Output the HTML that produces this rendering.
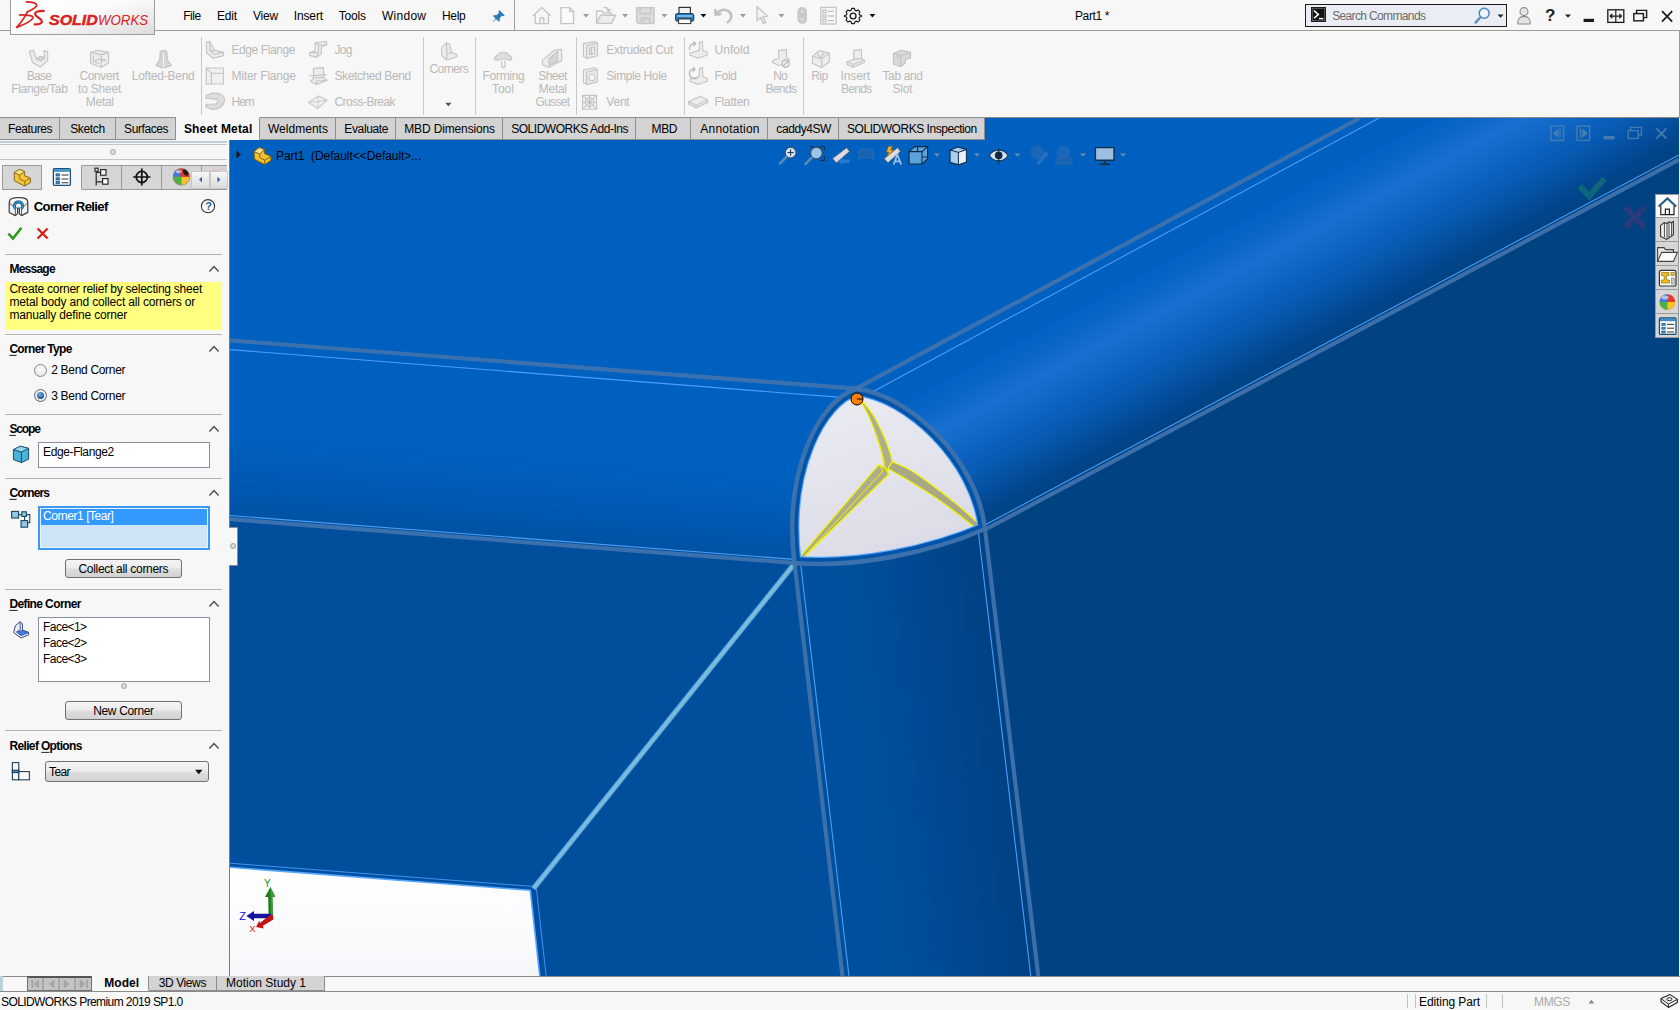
<!DOCTYPE html>
<html lang="en">
<head>
<meta charset="utf-8">
<title>SOLIDWORKS Premium 2019 - Part1</title>
<style>
*{box-sizing:border-box;margin:0;padding:0}
html,body{width:1680px;height:1010px;overflow:hidden;background:#f7f7f7;font-family:"Liberation Sans","DejaVu Sans",sans-serif;font-size:12px;color:#000}
body{position:relative}
.a{position:absolute}
svg{display:block;overflow:visible}
.t{position:absolute;z-index:7;transform-origin:0 50%;white-space:pre;line-height:16px;height:16px;margin-top:-8px}
.b{font-weight:bold}
#vp{position:absolute;left:230px;top:118px;width:1449px;height:858px;overflow:hidden}
#topbar{left:0;top:0;width:1680px;height:31px;background:#f7f7f7;border-bottom:1px solid #9c9c9c}
#logo{left:10px;top:-1px;width:145px;height:36px;border:1px solid #9e9e9e;background:linear-gradient(165deg,#ffffff 0%,#fbfbfb 45%,#dcdcdc 100%);z-index:5}
#ribbon{left:0;top:31px;width:1680px;height:86px;background:#f7f7f7}
.rsep{position:absolute;top:37px;width:1px;height:78px;background:#c9c9c9}
.ctab{position:absolute;top:117px;height:23px;background:#d3d3d3;border:1px solid #8e8e8e;border-left:none}
.ctab.act{background:#f7f7f7;border-top-color:#f7f7f7;border-bottom-color:#f7f7f7}
#panel{left:0;top:140px;width:230px;height:836px;background:#f7f7f7;border-right:1px solid #7c7c7c}
.psep{position:absolute;left:5px;width:217px;height:1px;background:#b4b4b4}
.ptab{position:absolute;top:165px;height:25px;background:#d6d6d6;border:1px solid #9a9a9a;border-left:none}
.ptab.act{background:#f7f7f7;border-bottom-color:#f7f7f7;border-top-color:#f7f7f7}
.btn{position:absolute;height:19px;border:1px solid #707070;border-radius:3px;background:linear-gradient(#f4f4f4 0%,#ececec 48%,#dedede 52%,#d2d2d2 100%)}
.box{position:absolute;background:#fff;border:1px solid #8a8fa0}
.btab{position:absolute;top:976px;height:15px;background:#d3d3d3;border:1px solid #8e8e8e;border-top:none}
.rt{position:absolute;left:1655px;width:24px;height:24px;background:#d6d6d6;border:1px solid #9a9a9a;border-top:none}
</style>
</head>
<body>
<svg id="vp" viewBox="230 118 1449 858">
<defs>
<linearGradient id="gCyl" gradientUnits="userSpaceOnUse" x1="856" y1="389" x2="943.2" y2="551.5">
<stop offset="0" stop-color="#0060c0"/>
<stop offset="0.17" stop-color="#0060c0"/>
<stop offset="0.30" stop-color="#0a67c8"/>
<stop offset="0.41" stop-color="#1870d0"/>
<stop offset="0.51" stop-color="#1269c8"/>
<stop offset="0.61" stop-color="#0c61be"/>
<stop offset="0.71" stop-color="#0859b1"/>
<stop offset="0.82" stop-color="#044e9e"/>
<stop offset="0.93" stop-color="#014589"/>
<stop offset="1" stop-color="#004282"/>
</linearGradient>
<linearGradient id="gLeft" gradientUnits="userSpaceOnUse" x1="500" y1="362" x2="486" y2="540">
<stop offset="0" stop-color="#0060c0"/>
<stop offset="0.5" stop-color="#0060c0"/>
<stop offset="0.75" stop-color="#005ab4"/>
<stop offset="1" stop-color="#0051a3"/>
</linearGradient>
<linearGradient id="gBot" gradientUnits="userSpaceOnUse" x1="820" y1="780" x2="1012" y2="758">
<stop offset="0" stop-color="#004f9e"/>
<stop offset="0.3" stop-color="#004f9d"/>
<stop offset="0.65" stop-color="#004890"/>
<stop offset="1" stop-color="#004182"/>
</linearGradient>
<linearGradient id="gCorner" x1="0" y1="0" x2="0.3" y2="1">
<stop offset="0" stop-color="#ececf2"/>
<stop offset="1" stop-color="#dcdce8"/>
</linearGradient>
<linearGradient id="gWhite" x1="0" y1="0" x2="0" y2="1">
<stop offset="0" stop-color="#ffffff"/>
<stop offset="1" stop-color="#f6f7fa"/>
</linearGradient>
</defs>
<!-- zone A: top-left flat -->
<rect x="230" y="118" width="1449" height="858" fill="#0060c0"/>
<!-- zone B: cylinder -->
<polygon points="856,388.7 1360,118 1679,118 1679,159 985,529" fill="url(#gCyl)"/>
<!-- zone C: right flat -->
<polygon points="985,529 1679,159 1679,976 1038.3,976" fill="#004282"/>
<!-- zone F: left bend -->
<polygon points="230,340.4 856,388.7 794.5,563 230,519.2" fill="url(#gLeft)"/>
<!-- zone E: bottom-left flat -->
<polygon points="230,519.2 794.5,563 842.5,976 230,976" fill="#004e9c"/>
<!-- zone D: bottom bend -->
<polygon points="794.5,563 985,529 1038.3,976 842.5,976" fill="url(#gBot)"/>
<g fill="none" stroke-linecap="butt">
<!-- white background area seen through the part, bottom-left -->
<polygon points="230,863.2 536.2,886.7 546.2,976 230,976" fill="#0050a2"/>
<polygon points="230,867.3 530.3,890.3 539.8,976 230,976" fill="url(#gWhite)"/>
<polyline points="230,863.2 536.2,886.7 546.2,976" stroke="#3f93f0" stroke-width="1"/>
<polyline points="230,867.3 530.3,890.3 539.8,976" stroke="#57a6ff" stroke-width="1.6"/>
<!-- diagonal seam -->
<line x1="795" y1="563" x2="533.5" y2="888.5" stroke="#4f9be0" stroke-width="5.5"/>
<line x1="795" y1="563" x2="533.5" y2="888.5" stroke="#7cbcd8" stroke-width="3.4"/>
<!-- thick silhouette edges -->
<g stroke="#3f73ad" stroke-opacity="0.92" stroke-width="4.2">
<line x1="230" y1="340.4" x2="856" y2="388.7"/>
<line x1="856" y1="388.7" x2="1360" y2="118"/>
<line x1="985" y1="529.6" x2="1679" y2="159.6"/>
<line x1="794.5" y1="563" x2="842.5" y2="976"/>
<line x1="985" y1="529" x2="1038.3" y2="976"/>
<line x1="230" y1="519.2" x2="794.5" y2="563"/>
</g>
<!-- thin tangent edges -->
<g stroke="#4c9ef6" stroke-width="1.1">
<line x1="230" y1="349.6" x2="848" y2="397.9"/>
<line x1="866" y1="395.4" x2="1379" y2="118"/>
<line x1="982" y1="526.6" x2="1679" y2="154.9"/>
<line x1="800.8" y1="565" x2="849" y2="976"/>
<line x1="978.5" y1="533" x2="1030.8" y2="976"/>
<line x1="230" y1="515.5" x2="794" y2="559.4"/>
</g>
</g>
<!-- corner relief region -->
<clipPath id="cpCorner"><path d="M856,389 C908,394 977,458 985,529 C930,553 855,568 794.5,563 C783,470 820,400 856,389 Z"/></clipPath>
<g clip-path="url(#cpCorner)">
<path d="M856,389 C908,394 977,458 985,529 C930,553 855,568 794.5,563 C783,470 820,400 856,389 Z" fill="url(#gCorner)"/>
<!-- tear ridges -->
<path d="M861.5,402.8 C862.8,405.3 866.9,412.2 869.4,417.8 C871.9,423.4 874.6,430.6 876.7,436.5 C878.8,442.4 880.7,448.0 881.9,453.2 C883.1,458.4 883.6,465.3 884.0,467.7 L887.4,471.6 L892.3,461.5  C891.9,460.1 891.6,457.4 890.2,453.2 C888.8,449.0 886.8,442.8 884.0,436.5 C881.2,430.2 877.1,421.5 873.6,415.7 C870.1,409.9 864.5,404.0 862.7,401.6 Z" fill="#aeae8a" stroke="#f4f400" stroke-width="1.2"/>
<path d="M892.0,461.6 C895.6,463.3 906.1,467.5 913.4,471.9 C920.6,476.2 928.1,482.2 935.5,487.7 C942.9,493.2 949.5,498.2 957.7,505.1 C965.9,512.0 980.1,524.9 984.6,528.9 L978.3,530.2 C974.3,527.1 962.1,517.3 954.5,511.5 C946.9,505.7 939.8,500.6 932.4,495.6 C925.0,490.6 917.6,485.9 910.2,481.4 C902.8,476.9 891.7,470.8 888.0,468.7 Z" fill="#a8a886" stroke="#f4f400" stroke-width="1.2"/>
<path d="M878.8,464.6 L797.5,559.5 L801,560 L888.5,474.5 L886,469 Z" fill="#adad8a" stroke="#f4f400" stroke-width="1.2"/>
<path d="M878.8,464.6 L883,471 L801,560" fill="none" stroke="#f4f400" stroke-width="1"/>
<path d="M884,467.7 L887.4,471.6 L888.5,474.5 M876.7,436.5 Q882,452 886.4,469.6" fill="none" stroke="#e8e800" stroke-width=".9"/>
<path d="M856,389 C908,394 977,458 985,529 C930,553 855,568 794.5,563 C783,470 820,400 856,389 Z" fill="none" stroke="#58a8ff" stroke-width="14.4"/>
<path d="M856,389 C908,394 977,458 985,529 C930,553 855,568 794.5,563 C783,470 820,400 856,389 Z" fill="none" stroke="#0054a8" stroke-width="12"/>
</g>
<path d="M856,389 C908,394 977,458 985,529 C930,553 855,568 794.5,563 C783,470 820,400 856,389 Z" fill="none" stroke="#3f73ad" stroke-opacity="0.92" stroke-width="4.6" stroke-linejoin="round"/>
<circle cx="857" cy="399" r="6" fill="#ff8000" stroke="#000" stroke-width="1"/>
<line x1="857" y1="399" x2="862.5" y2="399" stroke="#000" stroke-width="1"/>
<!-- triad -->
<g>
<polygon points="268.6,916.5 268.2,897 265,897 270.4,887 275.4,897 272.4,897 273,916.5" fill="#1c7c1c"/>
<polygon points="270.4,887 275.4,897 272.4,897 273,916.5 271,916.5 270.6,897" fill="#3c9c3c"/>
<polygon points="271,913.8 254,913.8 254,911 246.4,916 254,921 254,918.2 271,918.2" fill="#15159c"/>
<polygon points="273,915 273.4,919.6 263,925.8 263.6,928.6 256,927 259.4,920.6 260,923 270,915" fill="#c01414"/>
<text x="267.4" y="887" font-size="10" fill="#0a9a0a" text-anchor="middle" font-family="Liberation Sans, sans-serif">Y</text>
<text x="242.6" y="919.6" font-size="11" fill="#1010e8" text-anchor="middle" font-family="Liberation Sans, sans-serif">Z</text>
<text x="252.4" y="932" font-size="9.5" fill="#f01010" text-anchor="middle" font-family="Liberation Sans, sans-serif">X</text>
</g>
<!--VP-DETAIL2-->
</svg>
<!-- ===== title bar ===== -->
<div id="topbar" class="a"></div>
<div id="logo" class="a"></div>
<svg class="a" style="left:10px;top:0;z-index:6" width="145" height="35" viewBox="10 0 145 35">
<g fill="none" stroke="#d9231f" stroke-linecap="round" stroke-linejoin="round">
<path d="M26.4,1.9 C31,2 36.2,2.7 36.7,5.1 C37.1,7.6 31,10 27.3,11.9" stroke-width="1.7"/>
<path d="M27.6,11.6 C25,16.4 21,23 16.6,27.4 C24,24.6 31.8,21 32.9,18 C33.7,15.5 29,15 19.6,14.9" stroke-width="1.7"/>
<path d="M43.8,10.9 C39,10.8 35.3,11.8 35.1,13.8 C34.9,16.4 41.7,18.6 41.9,21.4 C42.1,23.6 38.6,24.6 34.6,24.4" stroke-width="2.2"/>
</g>
</svg>
<!-- pin -->
<svg class="a" style="left:491px;top:9px" width="15" height="15" viewBox="0 0 15 15"><path d="M8.2,1 L13.8,6.6 L12.4,7.2 L10.8,6.8 L8.6,9.4 L8.8,12 L7.6,12.6 L5.2,10.2 L1.2,13.8 L4.6,9.6 L2.2,7.2 L2.8,6 L5.4,6.2 L8,4 L7.6,2.4 Z" fill="#2b7ab9"/></svg>
<div class="a" style="left:514px;top:0;width:1px;height:30px;background:#a0a0a0"></div>
<!-- quick access toolbar -->
<svg class="a" style="left:530px;top:5px" width="350" height="22" viewBox="530 5 350 22">
<g fill="none" stroke="#c6c6c6" stroke-width="1.4" stroke-linejoin="round">
<!-- home -->
<path d="M532.8,16 L541.8,7.6 L550.8,16 M535.2,14.2 L535.2,23.6 L548.4,23.6 L548.4,14.2 M540,23.6 L540,18 L543.8,18 L543.8,23.6"/>
<!-- new -->
<path d="M561,7.6 L569.6,7.6 L573.6,11.6 L573.6,23.6 L561,23.6 Z M569.6,7.6 L569.6,11.6 L573.6,11.6" fill="#fbfbfb"/>
<!-- open -->
<path d="M596.6,23.4 L596.6,11 L602,11 L603.6,13 L611.4,13 L611.4,15.2" />
<path d="M596.6,23.4 L600.6,15.2 L615.6,15.2 L611.6,23.4 Z" fill="#ececec"/>
<path d="M603.4,7.6 C606.4,7 608.4,8.4 608.8,11 M606.8,10 L608.9,11.6 L610.6,9.2"/>
<!-- save -->
<path d="M636.6,7.6 L654,7.6 L654,23.6 L638.6,23.6 L636.6,21.6 Z" fill="#dcdcdc"/>
<path d="M640,7.6 L640,13.8 L650.6,13.8 L650.6,7.6 M641.2,23.6 L641.2,18.2 L649.6,18.2 L649.6,23.6 M644,19.4 L644,22.6" />
<!-- undo -->
<path d="M715.2,9 L715.6,14.8 L721.4,14 M716,14.4 C719,9.6 725.6,8.2 729.4,12 C732.6,15.4 731.4,20.4 727,23" stroke-width="2.6" stroke="#c2c2c2"/>
<!-- select arrow -->
<path d="M757,6.6 L757,20.8 L760.6,17.4 L763.4,23.6 L765.6,22.6 L762.8,16.6 L767.8,16.4 Z" fill="#f4f4f4"/>
</g>
<!-- traffic light -->
<rect x="797.4" y="7" width="9.6" height="17" rx="4.8" fill="#c9c9c9"/>
<circle cx="802.2" cy="11.6" r="1.6" fill="#dcdcdc"/><circle cx="802.2" cy="19.2" r="1.6" fill="#dcdcdc"/>
<!-- options list -->
<g fill="none" stroke="#c4c4c4" stroke-width="1.3">
<rect x="820.8" y="7.4" width="15.4" height="16.6"/>
<rect x="823" y="10" width="3" height="2.6"/><rect x="823" y="14.6" width="3" height="2.6"/><rect x="823" y="19.2" width="3" height="2.6"/>
<path d="M828,11.4 H834 M828,16 H834 M828,20.6 H834"/>
</g>
<!-- print -->
<rect x="679" y="7.4" width="11.4" height="7" fill="#f2f2f2" stroke="#333" stroke-width="1.2"/>
<rect x="675.6" y="13.6" width="18.2" height="7.6" rx="1.6" fill="#2a78b8" stroke="#0e3f66" stroke-width="1"/>
<rect x="678.6" y="19" width="12.2" height="4.6" fill="#fafafa" stroke="#333" stroke-width="1"/>
<rect x="677" y="15.2" width="15.4" height="1.6" fill="#8cc4ec"/>
<!-- gear -->
<g fill="none" stroke="#1a1a1a" stroke-width="1.35" stroke-linejoin="round">
<path d="M851.4,7.2 L854.6,7.2 L855.2,9.4 L856.8,10.1 L858.8,9 L861,11.2 L859.9,13.2 L860.6,14.8 L862.8,15.4 L862.8,16.6 L860.6,17.2 L859.9,18.8 L861,20.8 L858.8,23 L856.8,21.9 L855.2,22.6 L854.6,24.8 L851.4,24.8 L850.8,22.6 L849.2,21.9 L847.2,23 L845,20.8 L846.1,18.8 L845.4,17.2 L843.2,16.6 L843.2,15.4 L845.4,14.8 L846.1,13.2 L845,11.2 L847.2,9 L849.2,10.1 L850.8,9.4 Z" transform="translate(110.9,2.08) scale(0.87)"/>
<circle cx="853.1" cy="16" r="2.9"/>
</g>
<!-- dropdown arrows -->
<g fill="#9a9a9a">
<path d="M583,14 h6 l-3,3.4z"/><path d="M622,14 h6 l-3,3.4z"/><path d="M661.4,14 h6 l-3,3.4z"/><path d="M740,14 h6 l-3,3.4z"/><path d="M778.4,14 h6 l-3,3.4z"/>
</g>
<g fill="#111"><path d="M700.4,14 h6 l-3,3.4z"/><path d="M869.4,14 h6 l-3,3.4z"/></g>
</svg>
<!-- search box -->
<div class="a" style="left:1305px;top:4px;width:202px;height:23px;border:1px solid #1c1c1c;background:#eaedf4"></div>
<svg class="a" style="left:1305px;top:4px" width="202" height="23" viewBox="1305 4 202 23">
<rect x="1311" y="7" width="15" height="15" fill="#111"/>
<rect x="1312.2" y="8.2" width="12.6" height="12.6" fill="none" stroke="#8a8a8a" stroke-width=".6"/>
<path d="M1314,10.6 L1318.4,14.4 L1314,18.2" fill="none" stroke="#fff" stroke-width="1.5"/><path d="M1319,18.6 H1323.4" stroke="#fff" stroke-width="1.4"/>
<circle cx="1484.2" cy="13.2" r="5" fill="#eef6fc" stroke="#4a86c0" stroke-width="1.5"/>
<path d="M1480.4,17.2 L1475.6,22.6" stroke="#5a8fc2" stroke-width="2.4" stroke-linecap="round"/>
<path d="M1497.6,14.4 h6 l-3,3.4z" fill="#222"/>
</svg>
<!-- right window icons -->
<svg class="a" style="left:1510px;top:4px" width="170" height="24" viewBox="1510 4 170 24">
<circle cx="1524" cy="11.6" r="4" fill="#e4e4e4" stroke="#8a8a8a" stroke-width="1.1"/>
<path d="M1517.8,24 C1517.4,18.8 1520,16.4 1524,16.4 C1528,16.4 1530.6,18.8 1530.2,24 Z" fill="#e4e4e4" stroke="#8a8a8a" stroke-width="1.1"/>
<path d="M1565,14.4 h6 l-3,3.4z" fill="#222"/>
<rect x="1583.6" y="18.8" width="10.4" height="3.2" fill="#1a1a1a"/>
<rect x="1607.8" y="9.8" width="16" height="12.6" fill="none" stroke="#1a1a1a" stroke-width="1.3"/>
<path d="M1615.8,9.8 V22.4 M1610.2,16.1 H1621.4 M1612.4,14 L1610.2,16.1 L1612.4,18.2 M1619.2,14 L1621.4,16.1 L1619.2,18.2" fill="none" stroke="#1a1a1a" stroke-width="1.2"/>
<path d="M1636.6,13.4 V10.4 H1646.6 V17.6 H1643.6" fill="none" stroke="#1a1a1a" stroke-width="1.4"/>
<rect x="1633.8" y="13.6" width="9.6" height="7.2" fill="none" stroke="#1a1a1a" stroke-width="1.4"/>
<path d="M1662,11.2 L1672.2,21.6 M1672.2,11.2 L1662,21.6" stroke="#1a1a1a" stroke-width="1.7"/>
</svg>

<!-- ===== ribbon (CommandManager) ===== -->
<div id="ribbon" class="a"></div>
<div class="rsep" style="left:201px"></div><div class="rsep" style="left:423px"></div><div class="rsep" style="left:475px"></div>
<div class="rsep" style="left:576px"></div><div class="rsep" style="left:684px"></div><div class="rsep" style="left:803px"></div>
<svg class="a" style="left:0;top:36px" width="940" height="80" viewBox="0 36 940 80">
<g fill="#ececec" stroke="#c4c4c4" stroke-width="1.1" stroke-linejoin="round">
<!-- base flange -->
<path d="M29.4,51.4 L33.4,50.2 L36.2,58.6 L40.6,60.8 L44.8,57.8 L43.8,50.6 L47.6,51.6 L47.8,60.6 L40.4,67 L32.4,62.4 Z"/>
<path d="M36.2,58.6 L40.8,56.2 L44.8,57.8 L40.6,60.8 Z" fill="#dadada"/>
<!-- convert to sheet metal -->
<path d="M90.6,52.4 L97.6,50.2 L108.6,52.4 L108.6,62.8 L101.4,67.6 L90.6,63.6 Z"/>
<path d="M90.6,52.4 L101.2,54.6 L108.6,52.4 M101.2,54.6 L101.4,67.6 M93.4,55.4 L93.4,61.6 L99,63.4 M93.4,61.6 L99.4,59 L106.4,60.4" fill="none"/>
<!-- lofted bend -->
<path d="M160.2,52.2 C160.2,50 166.8,50 166.8,52.2 L167.4,60 L171.4,65.6 L163.6,68.2 L155.8,65.6 L159.6,60 Z" fill="#d6d6d6"/>
<path d="M163.6,53.6 L163.6,68.2" fill="none" stroke="#f4f4f4"/>
<!-- edge flange -->
<path d="M206.4,42.4 L209.8,41.4 L214.6,50.4 L223.6,52.4 L223.6,55.6 L213.4,58.2 L206.6,53 Z"/>
<path d="M209.8,41.4 L210,50.8 L214.4,54.2 L223.6,52.4 M210,50.8 L214.6,50.4" fill="none"/>
<!-- miter flange -->
<path d="M206.2,68 L223.4,68 L223.4,84 L206.2,84 Z" fill="#f0f0f0"/>
<path d="M206.2,68 L211.4,73.2 L223.4,73.2 M211.4,73.2 L211.4,84" fill="none"/>
<!-- hem -->
<path d="M206,95.4 L213,93 C222,93 225.4,96.6 224.4,101.2 C223.6,105.6 219,109.6 212.4,109.6 L206,107 L206,104.2 L214.8,104 C218,103.4 219,101 216.6,99.4 L206,98.2 Z" fill="#dcdcdc"/>
<!-- jog -->
<path d="M315,42.8 L326.4,41.4 L326.6,45 L321.4,46.6 L321.2,54 L316.6,57.4 L309.6,55.4 L309.6,52.6 L315.2,51 Z"/>
<path d="M315,42.8 L318.6,44.8 L326.6,45 M318.6,44.8 L318.4,52.4 L316.6,57.4 M309.6,52.6 L318.4,52.4" fill="none"/>
<!-- sketched bend -->
<path d="M313.4,68.4 L323.4,67.6 L323.8,77.6 L327,80.4 L316.4,84.6 L310.6,81.4 L313.6,77.8 Z"/>
<path d="M313.6,77.8 L323.8,77.6 M309,76 L326.6,74.6 M316.4,84.6 L316.4,81 L327,80.4" fill="none"/>
<!-- cross break -->
<path d="M308.6,102.4 L318.6,96 L327.2,100.4 L317.4,108.4 Z" fill="#f1f1f1"/>
<path d="M308.6,102.4 L327.2,100.4 M318.6,96 L317.4,108.4" fill="none" stroke="#d2d2d2"/>
<!-- corners -->
<path d="M441.6,47.4 L446.4,42.8 L449.4,44 L451.6,52.4 L457,54.6 L456.8,56.8 L446.4,60 L441.8,55.4 Z"/>
<path d="M446.4,42.8 L447,54 L446.4,60 M447,54 L451.6,52.4" fill="none"/>
<!-- forming tool -->
<path d="M494.6,59.6 C494,56 497.4,55.8 498.6,54 C500,51.6 506.4,51.6 507.8,54 C509,55.800000000000004 512.4,56 511.8,59.6 L508.2,60.4 C507.6,58.6 499,58.6 498.4,60.4 Z" fill="#dedede"/>
<path d="M501.6,60.4 L501.6,66 C501.6,68.2 505,68.2 505,66 L505,60.4" fill="#f3f3f3"/>
<!-- gusset -->
<path d="M542.4,60.4 L554.6,50 L561.6,49.4 L561.8,60.6 L549,67.6 L542.6,64.8 Z"/>
<path d="M549,59 L557.6,51.2 L557.6,61 L549,65.4 Z" fill="#d6d6d6"/>
<!-- extruded cut -->
<path d="M583.4,43.6 L594.4,41.6 L597.4,43.2 L597.4,55.8 L586.6,58.4 L583.4,56.4 Z"/>
<path d="M586.6,45.8 L597.4,43.2 M586.6,45.8 L586.6,58.4 M589.4,48 L594.6,46.8 L594.6,53.4 L589.4,54.6 Z M591.4,47.8 V54" fill="none"/>
<!-- simple hole -->
<path d="M583.4,70 L594.4,67.8 L597.4,69.6 L597.4,82 L586.6,84.6 L583.4,82.6 Z"/>
<path d="M586.6,72 L597.4,69.6 M586.6,72 L586.6,84.6" fill="none"/>
<ellipse cx="592" cy="77.4" rx="3" ry="3.4" fill="#f6f6f6"/>
<!-- vent -->
<rect x="582.6" y="95.4" width="14" height="13.8" fill="#f3f3f3"/>
<path d="M582.6,95.4 L596.6,109.2 M596.6,95.4 L582.6,109.2 M589.6,95.4 V109.2 M582.6,102.3 H596.6" fill="none"/>
<circle cx="589.6" cy="102.3" r="4.4" fill="none"/>
<!-- unfold -->
<path d="M699.4,42.2 L702.4,41.2 L702.8,50.6 L707.4,52 L707.2,55 L698.2,58.2 L690,55.2 L690,53 L699.2,50.4 Z"/>
<path d="M689.6,50 C688.8,45.8 691.6,43.4 695.4,43.6 M693.4,41.6 L695.6,43.6 L693.6,46" fill="none" stroke-width="1.5" stroke="#bdbdbd"/>
<!-- fold -->
<path d="M699.4,68.4 L702.4,67.4 L702.8,76.8 L707.4,78.2 L707.2,81.2 L698.2,84.4 L690,81.4 L690,79.2 L699.2,76.6 Z"/>
<path d="M696.8,78.4 C692,79.2 689,76.6 689.4,72.6 C689.8,69.8 692.4,68.6 694.6,69.4 M692.8,67.2 L695,69.4 L692.6,71.4" fill="none" stroke-width="1.5" stroke="#bdbdbd"/>
<!-- flatten -->
<path d="M688.6,101.6 L700.4,96.2 L707.6,100 L707.6,102.4 L696,108 L688.6,104 Z"/>
<path d="M688.6,101.6 L696,105.4 L707.6,100 M696,105.4 V108" fill="none"/>
<!-- no bends -->
<path d="M778.6,50.4 L786.4,49.6 L786.6,57.4 L789,59.2 L789,61.4 L778.8,65.4 L772.6,62.6 L772.6,60.6 L778.8,58.4 Z"/>
<circle cx="785.6" cy="63.6" r="3.6" fill="#f2f2f2" stroke="#bcbcbc" stroke-width="1.4"/><path d="M783.2,66 L788,61.2" stroke="#bcbcbc" stroke-width="1.4"/>
<!-- rip -->
<path d="M812.4,56.2 L819.4,50.6 L829.4,53 L829.4,62 L821.8,67.4 L812.4,63.6 Z"/>
<path d="M812.4,56.2 L821.6,58.6 L829.4,53 M821.6,58.6 L821.8,67.4 M817,53 L820.4,57.6 L824.4,52.4" fill="none"/>
<!-- insert bends -->
<path d="M853.6,50.6 L861.4,49.6 L861.6,58.6 L864.4,60.2 L864.2,62.6 L853,67.2 L846.8,64.2 L846.8,61.8 L853.8,59.4 Z"/>
<path d="M853.8,59.4 L861.6,58.6 M846.8,61.8 L853,64.6 L864.4,60.2 M853,64.6 V67.2" fill="none"/>
<!-- tab and slot -->
<path d="M893.4,53.4 L901.4,50.2 L910.6,52.4 L910.6,58 L905.4,59.6 L905.4,63 L900.6,66.8 L893.4,64 Z" fill="#d9d9d9"/>
<path d="M893.4,53.4 L900.8,55.6 L910.6,52.4 M900.8,55.6 L900.6,66.8 M897,54.4 L897,57 L900.8,58.2" fill="none"/>
</g>
<path d="M445.2,102.8 h6.4 l-3.2,3.4z" fill="#555"/>
</svg>
<!-- CommandManager tabs -->
<div class="a" style="left:0;top:117px;width:985px;height:1px;background:#8e8e8e"></div>
<div class="ctab" style="left:0;width:60px"></div>
<div class="ctab" style="left:60px;width:56px"></div>
<div class="ctab" style="left:116px;width:60px"></div>
<div class="ctab act" style="left:176px;width:84px"></div>
<div class="ctab" style="left:260px;width:76px"></div>
<div class="ctab" style="left:336px;width:60px"></div>
<div class="ctab" style="left:396px;width:107px"></div>
<div class="ctab" style="left:503px;width:133px"></div>
<div class="ctab" style="left:636px;width:55px"></div>
<div class="ctab" style="left:691px;width:77px"></div>
<div class="ctab" style="left:768px;width:71px"></div>
<div class="ctab" style="left:839px;width:146px"></div>
<div class="a" style="left:985px;top:117px;width:695px;height:1px;background:#8f877a"></div>

<!-- ===== PropertyManager panel ===== -->
<div id="panel" class="a"></div>
<div class="a" style="left:0;top:141px;width:227px;height:2px;background:#b9d3d8"></div>
<div class="a" style="left:0;top:144px;width:227px;height:1px;background:#c4c4c4"></div>
<div class="a" style="left:110px;top:149px;width:6px;height:6px;border-radius:3px;border:1px solid #a2a2a2;background:#dedede"></div>
<div class="a" style="left:0;top:159px;width:227px;height:1px;background:#c4c4c4"></div>
<!-- manager tabs -->
<div class="a" style="left:2px;top:189px;width:225px;height:1px;background:#9a9a9a"></div>
<div class="ptab" style="left:2px;width:40px;border-left:1px solid #9a9a9a"></div>
<div class="ptab act" style="left:42px;width:40px"></div>
<div class="ptab" style="left:82px;width:40px"></div>
<div class="ptab" style="left:122px;width:40px"></div>
<div class="ptab" style="left:162px;width:40px"></div>
<div class="ptab" style="left:202px;width:25px;border-right:none"></div>
<svg class="a" style="left:0;top:164px" width="230" height="28" viewBox="0 164 230 28">
<!-- feature manager icon (yellow part) -->
<path d="M14.2,172.6 L19.4,169.4 L24.6,171.6 L24.8,175.8 L30.4,178.2 L30.4,182.6 L24.6,186 L14.4,180.8 Z" fill="#f3c53a" stroke="#8a6a14" stroke-width="1"/>
<path d="M14.2,172.6 L19.6,175 L24.6,171.6 M19.6,175 L19.8,179 L24.8,181.4 L30.4,178.2 M24.8,181.4 L24.6,186" fill="none" stroke="#8a6a14" stroke-width=".9"/>
<path d="M19.4,169.4 L24.6,171.6 L19.6,175 L14.2,172.6 Z" fill="#fbe08a" stroke="#8a6a14" stroke-width=".8"/>
<!-- property manager icon -->
<rect x="53.4" y="168.6" width="17" height="16.8" rx="1.2" fill="#fdfdfd" stroke="#1a4f78" stroke-width="1.3"/>
<rect x="54" y="169.2" width="15.8" height="2.6" fill="#3f8ec8"/>
<g fill="#3f8ec8" stroke="#1a4f78" stroke-width=".7"><rect x="56" y="173.8" width="3.6" height="2.2"/><rect x="56" y="177.8" width="3.6" height="2.2"/><rect x="56" y="181.6" width="3.6" height="2.2"/></g>
<path d="M61.6,175 H68.4 M61.6,179 H68.4 M61.6,182.8 H68.4" stroke="#333" stroke-width="1.1"/>
<!-- configuration manager icon -->
<g fill="#fdfdfd" stroke="#2a2a2a" stroke-width="1.2"><path d="M96.2,168.6 V185.4 M96.2,172.4 H100.6 M96.2,181.8 H102.6" fill="none"/><rect x="95" y="168.2" width="3" height="3"/><rect x="100.6" y="169.6" width="5.4" height="5.6"/><rect x="102.6" y="178.6" width="5.4" height="5.6"/></g>
<!-- dimxpert icon -->
<circle cx="141.8" cy="177" r="5.6" fill="none" stroke="#111" stroke-width="1.7"/><path d="M141.8,168.4 V185.6 M133.2,177 H150.4" stroke="#111" stroke-width="1.7"/>
<!-- display manager icon -->
<circle cx="181.4" cy="176.8" r="8.4" fill="#e23a2e"/>
<path d="M181.4,176.8 L173,176.8 A8.4,8.4 0 0 1 178,169.1 Z" fill="#3d7be0"/>
<path d="M181.4,176.8 L173,176.8 A8.4,8.4 0 0 0 181.4,185.2 Z" fill="#4bb244"/>
<path d="M181.4,176.8 L181.4,185.2 A8.4,8.4 0 0 0 189.8,176.8 Z" fill="#f4c524"/>
<path d="M181.4,176.8 L189.8,176.8 A8.4,8.4 0 0 0 178,169.1 Z" fill="#e23a2e"/>
<ellipse cx="185.6" cy="172.4" rx="2.2" ry="3.6" transform="rotate(-35 185.6 172.4)" fill="#1a1a1a"/>
<ellipse cx="178.6" cy="171.6" rx="3" ry="1.6" fill="#fff" fill-opacity=".55"/>
<circle cx="181.4" cy="176.8" r="8.4" fill="none" stroke="#8a8a8a" stroke-width=".6"/>
<path d="M212,171 L224,169.4 L227,171.4 L227,175 L214,176.6 Z" fill="#f4dede" stroke="#d0b4b4" stroke-width=".8"/>
</svg>
<!-- tab scroll buttons -->
<div class="a" style="left:191px;top:171px;width:19px;height:18px;border:1px solid #c8c8c8;background:linear-gradient(#f6f6f6,#dcdcdc)"></div>
<div class="a" style="left:210px;top:171px;width:18px;height:18px;border:1px solid #c8c8c8;background:linear-gradient(#f6f6f6,#dcdcdc)"></div>
<svg class="a" style="left:191px;top:171px" width="37" height="18" viewBox="191 171 37 18"><path d="M202,176.8 v5.6 l-3,-2.8z M217.4,176.8 v5.6 l3,-2.8z" fill="#3a5fc0"/></svg>
<!-- header icon, help, ok / cancel -->
<svg class="a" style="left:0;top:194px" width="230" height="50" viewBox="0 194 230 50">
<path d="M9.2,202.8 C9.4,200.4 10.6,198.9 12,198.5 C14.6,197.2 22.6,197.2 25.6,198.6 C27,199.2 27.7,200.6 27.8,202.8 L27.8,212.4 L21.5,215.6 L19.4,213.9 L19.4,208 L17.6,208 L17.6,213.9 L15.4,215.6 L9.2,212.5 Z" fill="#f3f3f3" stroke="#3c3c3c" stroke-width="1.2" stroke-linejoin="round"/>
<path d="M9.2,202.8 L14.2,207.2 M27.8,202.8 L22.8,207.2 M15.4,215.6 V209 M21.5,215.6 V209" stroke="#4a4a4a" stroke-width=".9" fill="none"/>
<ellipse cx="18.5" cy="199.9" rx="4.8" ry="1.5" fill="#ffffff"/>
<path d="M15.9,208.8 A4.1,3.9 0 1 1 21.1,208.8" fill="none" stroke="#1f6c9e" stroke-width="3.1"/>
<path d="M15.9,208.8 A4.1,3.9 0 1 1 21.1,208.8" fill="none" stroke="#4597cb" stroke-width="1"/>
<circle cx="208" cy="206.2" r="6.6" fill="#fbfbfb" stroke="#333" stroke-width="1.1"/>
<path d="M8.4,233.6 L13,238.6 L21.4,227.8" fill="none" stroke="#2c9a1e" stroke-width="2.6" stroke-linejoin="miter"/>
<path d="M37.6,228.4 L47.6,238.6 M47.6,228.4 L37.6,238.6" stroke="#dc1a0e" stroke-width="2.2"/>
</svg>
<div class="psep" style="top:254px"></div>
<!-- message -->
<div class="a" style="left:5px;top:282px;width:217px;height:48px;background:#ffff80"></div>
<div class="psep" style="top:334px"></div>
<!-- radios -->
<div class="a" style="left:34px;top:364px;width:13px;height:13px;border-radius:7px;border:1px solid #8a8a8a;background:radial-gradient(circle at 50% 40%,#ffffff 0%,#eeeeee 55%,#d4d4d4 100%)"></div>
<div class="a" style="left:34px;top:389px;width:13px;height:13px;border-radius:7px;border:1px solid #5c6a80;background:radial-gradient(circle at 50% 40%,#ffffff 0%,#eeeeee 55%,#d4d4d4 100%)"></div>
<div class="a" style="left:37px;top:392px;width:7px;height:7px;border-radius:4px;background:radial-gradient(circle at 40% 35%,#6ab4ee,#0a2a58)"></div>
<div class="psep" style="top:414px"></div>
<!-- scope -->
<div class="box" style="left:38px;top:442px;width:172px;height:26px"></div>
<div class="psep" style="top:478px"></div>
<!-- corners list -->
<div class="a" style="left:38px;top:506px;width:172px;height:44px;background:#cde4f7;border:2px solid #3d9bf3;box-shadow:inset 0 0 0 1px #e8f3fc"></div>
<div class="a" style="left:41px;top:509px;width:166px;height:16px;background:#3399ff"></div>
<div class="btn" style="left:65px;top:559px;width:117px"></div>
<div class="psep" style="top:589px"></div>
<!-- define corner -->
<div class="box" style="left:38px;top:617px;width:172px;height:65px"></div>
<div class="a" style="left:121px;top:683px;width:6px;height:6px;border-radius:3px;border:1px solid #a2a2a2;background:#dedede"></div>
<div class="btn" style="left:65px;top:701px;width:117px"></div>
<div class="psep" style="top:730px"></div>
<!-- relief dropdown -->
<div class="btn" style="left:45px;top:761px;width:164px;height:21px"></div>
<!-- group icons + chevrons -->
<svg class="a" style="left:0;top:260px" width="230" height="530" viewBox="0 260 230 530">
<g fill="none" stroke="#4a4a4a" stroke-width="1.4">
<path d="M209.4,271.4 L214,266.6 L218.6,271.4"/><path d="M209.4,351.4 L214,346.6 L218.6,351.4"/><path d="M209.4,431.4 L214,426.6 L218.6,431.4"/>
<path d="M209.4,495.4 L214,490.6 L218.6,495.4"/><path d="M209.4,606.4 L214,601.6 L218.6,606.4"/><path d="M209.4,748.4 L214,743.6 L218.6,748.4"/>
</g>
<!-- underlines for accelerator letters -->
<path d="M9.4,355.4 H16.6 M9.4,435.4 H15.8 M9.4,499.4 H16.6 M9.4,610.4 H17.6 M41.4,752.4 H49.4" stroke="#222" stroke-width="1"/>
<!-- scope cube -->
<path d="M13.4,449.6 L20.4,446.2 L28.6,448.4 L28.6,459.2 L21.4,462.6 L13.4,459.6 Z" fill="#49b2d6" stroke="#1c4a66" stroke-width="1"/>
<path d="M13.4,449.6 L21.4,452 L28.6,448.4 M21.4,452 L21.4,462.6" fill="none" stroke="#1c4a66" stroke-width="1"/>
<path d="M13.4,449.6 L20.4,446.2 L28.6,448.4 L21.4,452 Z" fill="#8ed4ea" stroke="#1c4a66" stroke-width=".8"/>
<!-- corners icon -->
<g fill="#8fc8e6" stroke="#1d4860" stroke-width="1.1"><path d="M18.6,514.6 H24.6 V522.8 M24.6,514.6 H29.8 V522.6 H26" fill="none"/><rect x="11.6" y="511.4" width="7" height="6.6"/><rect x="21" y="520.6" width="6.6" height="6.6"/><rect x="21.8" y="511.8" width="4.6" height="4.6"/></g>
<!-- define corner icon -->
<path d="M15.4,625.6 L20,621.8 L22.4,623.6 L22.6,630.4 L28.6,632.4 L28.4,634.8 L21,638 L13.6,632.6 Z" fill="#e6ecf8" stroke="#3a4a78" stroke-width="1"/>
<path d="M16.6,632 L22.6,630.4 L28.6,632.4 L21,635.6 Z" fill="#3f7fe0" stroke="#2a4a9a" stroke-width=".8"/>
<path d="M20,621.8 L20.4,629.4 L16.6,632" fill="none" stroke="#3a4a78" stroke-width=".9"/>
<!-- relief type icon -->
<g fill="#fafafa" stroke="#1f3f58" stroke-width="1.1"><rect x="12.4" y="762.6" width="6.4" height="9"/><rect x="12.4" y="771.6" width="6.4" height="8.2"/><rect x="18.8" y="771.6" width="10.6" height="8.2"/><rect x="12.4" y="770.2" width="6.4" height="2.4" fill="#3f8ec8"/></g>
<path d="M195,769.8 h7.6 l-3.8,4.4z" fill="#111"/>
</svg>
<!-- panel / viewport splitter handle -->
<div class="a" style="left:229px;top:527px;width:9px;height:39px;background:#f7f7f7;border:1px solid #8c8c8c;border-left:none"></div>
<div class="a" style="left:230px;top:543px;width:6px;height:6px;border-radius:3px;border:1px solid #9a9a9a;background:#dcdcdc"></div>

<!-- ===== viewport overlays ===== -->
<svg class="a" style="left:230px;top:140px" width="900" height="30" viewBox="230 140 900 30">
<!-- tree header -->
<path d="M236.4,150.6 v8 l4.6,-4z" fill="#1a1a1a"/>
<path d="M254,151.4 L259.4,147.6 L264.4,149.6 L264.6,153.6 L271,156.4 L271,160.4 L264.6,164.6 L254.4,159.2 Z" fill="#f0c030" stroke="#7a5c10" stroke-width="1"/>
<path d="M254,151.4 L259.6,154 L264.4,149.6 M259.6,154 L259.8,157.6 L264.8,160.2 L271,156.4 M264.8,160.2 L264.6,164.6" fill="none" stroke="#7a5c10" stroke-width=".9"/>
<path d="M259.4,147.6 L264.4,149.6 L259.6,154 L254,151.4 Z" fill="#fbe28e" stroke="#7a5c10" stroke-width=".8"/>
<!-- heads-up view toolbar -->
<g stroke-linejoin="round">
<circle cx="790.6" cy="152.6" r="5.6" fill="#cfe4f6" stroke="#2a5078" stroke-width="1.4"/>
<path d="M786.4,157 L780,163.4" stroke="#5c88b4" stroke-width="2.6" stroke-linecap="round"/>
<path d="M790.6,149.4 v6.4 M787.4,152.6 h6.4" stroke="#16324e" stroke-width="1"/>
<circle cx="816.4" cy="153" r="6" fill="#9cc4e8" stroke="#2a5078" stroke-width="1.4"/>
<path d="M811.8,157.8 L805.4,164" stroke="#5c88b4" stroke-width="2.6" stroke-linecap="round"/>
<path d="M809.6,146.6 h4 M820,146.6 h4.4 v4 M824.4,156 v4.4 h-4" fill="none" stroke="#16324e" stroke-width="1.1"/>
<path d="M832.4,158.6 L846.6,147.6 L849.6,151.4 L836.4,163 Z" fill="#d8dce2" stroke="#4a5a70" stroke-width="1"/>
<path d="M849.6,159.6 h-7 v-2.4 l-4.6,4 l4.6,4 v-2.4 h7z" fill="#2a7ad0"/>
<path d="M858.6,152 C858.6,147.600 873.6,147.600 873.6,152 L873.6,160 C873.6,156.400 858.6,156.400 858.600,160 Z" fill="#2a66a8" fill-opacity=".55" stroke="#3a70ac" stroke-opacity=".7" stroke-width="1"/>
<path d="M884,158.600 L897.6,147.600 L900.6,151.400 L888,163 Z" fill="#d8dce2" stroke="#4a5a70" stroke-width="1"/>
<path d="M888.6,146.400 L892.6,146.400 L890.400,150 L893.400,150 L887.400,156.400 L888.800,152 L886.400,152 Z" fill="#f4b020" stroke="#a86a08" stroke-width=".6"/>
<path d="M893.600,164.600 L897.400,154.600 L901.200,164.600 M895,161.400 h4.800" fill="none" stroke="#9cc4e8" stroke-width="1.6"/>
<path d="M909,151.600 L914.600,146.600 L927.600,146.600 L927.600,159 L922,164 L909,164 Z" fill="#5aa2dc" stroke="#0e2c48" stroke-width="1.2"/>
<path d="M909,151.600 H922 V164 M922,151.600 L927.600,146.600 M917.600,146.600 v5 M922,157 h5.600" fill="none" stroke="#0e2c48" stroke-width="1.100"/>
<path d="M950,150 L958,147 L966.400,149.600 L966.400,162 L958.400,164.800 L950,162.400 Z" fill="#a8d0f0" stroke="#0e2c48" stroke-width="1.2"/>
<path d="M958.400,152.400 L966.400,149.600 L966.400,162 L958.400,164.800 Z" fill="#e8f0f8" stroke="#0e2c48" stroke-width="1"/>
<path d="M950,150 L958.400,152.400" stroke="#0e2c48" stroke-width="1"/>
<path d="M989.400,155.400 C993.400,148.400 1004,148.400 1008,155.400 C1004,162.400 993.400,162.400 989.400,155.400 Z" fill="#d0e4f4" stroke="#1c3f60" stroke-width="1.1"/>
<circle cx="998.700" cy="155.400" r="3.800" fill="#16283c"/><path d="M998.700,148.400 V164" stroke="#16283c" stroke-width="1"/>
<circle cx="1037.400" cy="152.600" r="7" fill="#2c6cb0" fill-opacity=".6"/><path d="M1036,163.600 L1046,151.600 L1048.600,154 L1038.600,165.600 Z" fill="#3a78b8" fill-opacity=".7"/>
<circle cx="1063.400" cy="152.400" r="7" fill="#2c6cb0" fill-opacity=".6"/><path d="M1055,157.600 h17.600 v7.400 h-17.600z" fill="#2c66a6" fill-opacity=".55"/>
<rect x="1095.400" y="147.600" width="18.600" height="12.600" fill="#9cc0e4" stroke="#16304c" stroke-width="1.400"/>
<path d="M1104.700,160.400 v3.400 M1099.400,164.400 h10.600" stroke="#16304c" stroke-width="1.800"/>
</g>
<g fill="#6a8aa8"><path d="M934,153.400 h6 l-3,3.400z"/><path d="M974,153.400 h6 l-3,3.400z"/><path d="M1014.400,153.400 h6 l-3,3.400z"/><path d="M1080,153.400 h6 l-3,3.400z"/><path d="M1120,153.400 h6 l-3,3.400z"/></g>
</svg>
<!-- viewport window controls + confirmation corner -->
<svg class="a" style="left:1545px;top:120px" width="135" height="115" viewBox="1545 120 135 115">
<g fill="none" stroke="#4f80ae" stroke-opacity=".85" stroke-width="1.4">
<rect x="1551" y="126" width="12.600" height="14.400"/><path d="M1560,128.400 v9.600 M1557.600,130 l-3.600,3.200 l3.600,3.200z" fill="#4f80ae"/>
<rect x="1577" y="126" width="12.600" height="14.400"/><path d="M1580.600,128.400 v9.600 M1583,130 l3.600,3.200 l-3.600,3.200z" fill="#4f80ae"/>
<path d="M1630.600,130.400 V127.400 H1641.400 V135 H1638.400"/><rect x="1628.200" y="130.600" width="10" height="7.800"/>
<path d="M1656.400,128.400 L1666.400,138.600 M1666.400,128.400 L1656.400,138.600" stroke-width="2"/>
</g>
<rect x="1603.400" y="136" width="11.200" height="3.400" fill="#4f80ae" fill-opacity=".85"/>
<path d="M1579.600,186 L1589.200,196 L1604.400,178.800" fill="none" stroke="#0e6a78" stroke-opacity=".9" stroke-width="6"/>
<path d="M1625,207 L1644.600,227.400 M1644.600,207 L1625,227.400" stroke="#2c3a7a" stroke-opacity=".95" stroke-width="6"/>
</svg>
<!-- task pane tabs (right) -->
<div class="rt" style="top:194px;background:#fbfbfb;border-top:1px solid #9a9a9a;height:24px"></div>
<div class="rt" style="top:218px"></div><div class="rt" style="top:242px"></div><div class="rt" style="top:266px"></div><div class="rt" style="top:290px"></div><div class="rt" style="top:314px"></div>
<svg class="a" style="left:1655px;top:194px" width="25" height="145" viewBox="1655 194 25 145">
<path d="M1658.600,206.400 L1667.400,198.400 L1676.200,206.400" fill="none" stroke="#1f5f86" stroke-width="2"/>
<path d="M1660.800,205.400 V214.600 H1674 V205.400 M1665.400,214.600 V209.200 H1669.400 V214.600" fill="#fdfdfd" stroke="#222" stroke-width="1.200"/>
<path d="M1660.600,225.400 L1664.400,222.600 L1667,223.600 L1669,221.800 L1671.600,222.800 L1673.400,221.600 L1673.400,234.800 L1666.600,239.400 L1660.600,236.400 Z" fill="#f2f2f2" stroke="#333" stroke-width="1.100"/>
<path d="M1664.400,222.600 V237.400 M1667,223.600 V238.600 M1669,221.800 L1669,237.600 M1671.600,222.800 V236" stroke="#333" stroke-width=".9" fill="none"/>
<path d="M1657.600,261.400 V247.600 H1664 L1665.600,249.600 H1673.400 V252.400" fill="#e8e8e8" stroke="#444" stroke-width="1.100"/>
<path d="M1657.600,261.400 L1661.600,252.400 H1677.400 L1673.400,261.400 Z" fill="#fafafa" stroke="#444" stroke-width="1.100"/>
<rect x="1659.400" y="270.400" width="16.600" height="15.600" rx="1.600" fill="#fdfdfd" stroke="#333" stroke-width="1.200"/>
<path d="M1661.600,272.600 h7.400 v3 h-2.400 v4.400 h2.800 v3 h-8 v-3 h2.800 v-4.400 h-2.600z" fill="#f4c020" stroke="#8a6a10" stroke-width=".7"/>
<rect x="1671" y="272.600" width="3.200" height="3" fill="#f4c020" stroke="#8a6a10" stroke-width=".6"/><rect x="1671.600" y="278" width="2.600" height="6" fill="#c8c8c8" stroke="#666" stroke-width=".5"/>
<circle cx="1667.400" cy="302" r="7.800" fill="#e23a2e"/>
<path d="M1667.400,302 L1659.600,302 A7.800,7.800 0 0 1 1667.400,294.200 Z" fill="#3d7be0"/>
<path d="M1667.400,302 L1659.600,302 A7.800,7.800 0 0 0 1667.400,309.800 Z" fill="#4bb244"/>
<path d="M1667.400,302 L1667.400,309.800 A7.800,7.800 0 0 0 1675.200,302 Z" fill="#f4c524"/>
<ellipse cx="1665" cy="297.600" rx="3.600" ry="2" fill="#fff" fill-opacity=".55"/>
<rect x="1659.400" y="318" width="16.600" height="16.400" rx="1" fill="#fdfdfd" stroke="#1a4f78" stroke-width="1.300"/>
<rect x="1660" y="318.600" width="15.400" height="2.600" fill="#3f8ec8"/>
<g fill="#3f8ec8" stroke="#1a4f78" stroke-width=".6"><rect x="1661.800" y="323.400" width="3.400" height="2"/><rect x="1661.800" y="327.200" width="3.400" height="2"/><rect x="1661.800" y="331" width="3.400" height="2"/></g>
<path d="M1667,324.400 H1674 M1667,328.200 H1674 M1667,332 H1674" stroke="#333" stroke-width="1"/>
</svg>
<div class="a" style="left:1679px;top:118px;width:1px;height:858px;background:#eef1f4"></div>
<div class="a" style="left:1679px;top:31px;width:1px;height:87px;background:#9a9a9a"></div>
<div class="a" style="left:1677px;top:977px;width:2px;height:14px;background:#cfe0e4"></div>
<!-- ===== bottom tab strip + status bar ===== -->
<div class="a" style="left:0;top:976px;width:1680px;height:15px;background:#f7f7f7;border-top:1px solid #8f8a80"></div>
<div class="a" style="left:0;top:976px;width:3px;height:15px;background:#b9d3d8"></div>
<div class="a" style="left:0;top:991px;width:1680px;height:1px;background:#8a8a8a"></div>
<div class="a" style="left:27px;top:976px;width:65px;height:15px;background:#c4c4c4;border:1px solid #6e6e6e;border-top:2px solid #555"></div>
<svg class="a" style="left:27px;top:977px" width="65" height="14" viewBox="27 977 65 14">
<path d="M43,978 V991 M59,978 V991 M75,978 V991" stroke="#8a8a8a" stroke-width="1"/>
<g fill="#a8a8a8" stroke="#9a9a9a" stroke-width=".5"><path d="M32,980 v8 M38.600,980 v8 l-5,-4z"/><path d="M54,980 v8 l-5,-4z"/><path d="M64,980 v8 l5,-4z"/><path d="M80,980 v8 l5,-4z M86.600,980 v8"/></g>
<path d="M32.400,980 v8 M87,980 v8" stroke="#a0a0a0" stroke-width="1.400"/>
</svg>
<div class="btab" style="left:92px;width:57px;background:#f7f7f7;border-color:#f7f7f7 #8e8e8e #f7f7f7 #f7f7f7"></div>
<div class="btab" style="left:149px;width:68px;border-left:none"></div>
<div class="btab" style="left:217px;width:108px;border-left:none"></div>
<div class="a" style="left:1407px;top:994px;width:1px;height:14px;background:#c4c4c4"></div>
<div class="a" style="left:1415px;top:994px;width:1px;height:14px;background:#c4c4c4"></div>
<div class="a" style="left:1486px;top:994px;width:1px;height:14px;background:#c4c4c4"></div>
<div class="a" style="left:1502px;top:994px;width:1px;height:14px;background:#c4c4c4"></div>
<svg class="a" style="left:1585px;top:993px" width="95" height="17" viewBox="1585 993 95 17">
<path d="M1588.400,1003.400 h6 l-3,-3.600z" fill="#8a8a8a"/>
<path d="M1661,998.600 L1670,994.600 L1677.400,999.400 L1677.400,1002.400 L1668.400,1007.400 L1661,1001.800 Z" fill="#f4f4f4" stroke="#222" stroke-width="1.100" stroke-linejoin="round"/>
<path d="M1661,998.600 L1668.400,1004 L1677.400,999.400 M1668.400,1004 V1007.400" fill="none" stroke="#222" stroke-width="1"/>
<ellipse cx="1669.400" cy="999.200" rx="2.600" ry="1.500" fill="none" stroke="#222" stroke-width="1"/>
</svg>

<!-- ===== text labels ===== -->
<span class="t b" style="left:49.10px;top:19.50px;font-size:14.7px;color:#d9231f;font-style:italic;-webkit-text-stroke:0.45px #d9231f;transform:scaleX(1.0871);">SOLID</span>
<span class="t" style="left:98.40px;top:19.50px;font-size:14.7px;color:#d9231f;font-style:italic;transform:scaleX(0.9045);">WORKS</span>
<span class="t" style="left:183.25px;top:16.00px;letter-spacing:-0.461px;">File</span>
<span class="t" style="left:217.00px;top:16.00px;letter-spacing:-0.234px;">Edit</span>
<span class="t" style="left:253.00px;top:16.00px;letter-spacing:-0.199px;">View</span>
<span class="t" style="left:293.75px;top:16.00px;letter-spacing:-0.128px;">Insert</span>
<span class="t" style="left:338.75px;top:16.00px;letter-spacing:-0.203px;">Tools</span>
<span class="t" style="left:382.00px;top:16.00px;letter-spacing:0.260px;">Window</span>
<span class="t" style="left:442.00px;top:16.00px;letter-spacing:-0.297px;">Help</span>
<span class="t" style="left:1075.00px;top:16.00px;letter-spacing:-0.384px;">Part1 *</span>
<span class="t" style="left:1332.20px;top:16.00px;color:#6a6a6a;letter-spacing:-0.641px;">Search Commands</span>
<span class="t b" style="left:1545.00px;top:16.00px;font-size:17px;color:#222;letter-spacing:-0.791px;">?</span>
<span class="t" style="left:26.75px;top:76.20px;color:#b9b9b9;letter-spacing:-0.715px;">Base</span>
<span class="t" style="left:11.25px;top:89.20px;color:#b9b9b9;letter-spacing:-0.312px;">Flange/Tab</span>
<span class="t" style="left:79.50px;top:76.20px;color:#b9b9b9;letter-spacing:-0.397px;">Convert</span>
<span class="t" style="left:78.00px;top:89.20px;color:#b9b9b9;letter-spacing:-0.182px;">to Sheet</span>
<span class="t" style="left:85.75px;top:102.20px;color:#b9b9b9;letter-spacing:-0.269px;">Metal</span>
<span class="t" style="left:131.75px;top:76.20px;color:#b9b9b9;letter-spacing:-0.240px;">Lofted-Bend</span>
<span class="t" style="left:231.50px;top:50.20px;color:#b9b9b9;letter-spacing:-0.415px;">Edge Flange</span>
<span class="t" style="left:231.50px;top:76.20px;color:#b9b9b9;letter-spacing:-0.204px;">Miter Flange</span>
<span class="t" style="left:231.50px;top:102.20px;color:#b9b9b9;letter-spacing:-1.031px;">Hem</span>
<span class="t" style="left:334.50px;top:50.20px;color:#b9b9b9;letter-spacing:-0.703px;">Jog</span>
<span class="t" style="left:334.50px;top:76.20px;color:#b9b9b9;letter-spacing:-0.397px;">Sketched Bend</span>
<span class="t" style="left:334.50px;top:102.20px;color:#b9b9b9;letter-spacing:-0.562px;">Cross-Break</span>
<span class="t" style="left:429.50px;top:69.45px;color:#b9b9b9;letter-spacing:-0.562px;">Corners</span>
<span class="t" style="left:482.50px;top:76.20px;color:#b9b9b9;letter-spacing:-0.288px;">Forming</span>
<span class="t" style="left:492.00px;top:89.20px;color:#b9b9b9;letter-spacing:-0.066px;">Tool</span>
<span class="t" style="left:538.25px;top:76.20px;color:#b9b9b9;letter-spacing:-0.572px;">Sheet</span>
<span class="t" style="left:538.75px;top:89.20px;color:#b9b9b9;letter-spacing:-0.269px;">Metal</span>
<span class="t" style="left:535.50px;top:102.20px;color:#b9b9b9;letter-spacing:-0.669px;">Gusset</span>
<span class="t" style="left:606.25px;top:50.20px;color:#b9b9b9;letter-spacing:-0.275px;">Extruded Cut</span>
<span class="t" style="left:606.25px;top:76.20px;color:#b9b9b9;letter-spacing:-0.382px;">Simple Hole</span>
<span class="t" style="left:606.25px;top:102.20px;color:#b9b9b9;letter-spacing:-0.195px;">Vent</span>
<span class="t" style="left:714.50px;top:50.20px;color:#b9b9b9;letter-spacing:0.052px;">Unfold</span>
<span class="t" style="left:714.50px;top:76.20px;color:#b9b9b9;letter-spacing:-0.273px;">Fold</span>
<span class="t" style="left:714.50px;top:102.20px;color:#b9b9b9;letter-spacing:-0.241px;">Flatten</span>
<span class="t" style="left:773.25px;top:76.20px;color:#b9b9b9;letter-spacing:-0.797px;">No</span>
<span class="t" style="left:765.50px;top:89.20px;color:#b9b9b9;letter-spacing:-0.656px;">Bends</span>
<span class="t" style="left:811.25px;top:76.20px;color:#b9b9b9;letter-spacing:-0.589px;">Rip</span>
<span class="t" style="left:840.50px;top:76.20px;color:#b9b9b9;letter-spacing:-0.086px;">Insert</span>
<span class="t" style="left:841.00px;top:89.20px;color:#b9b9b9;letter-spacing:-0.706px;">Bends</span>
<span class="t" style="left:882.50px;top:76.20px;color:#b9b9b9;letter-spacing:-0.386px;">Tab and</span>
<span class="t" style="left:892.50px;top:89.20px;color:#b9b9b9;letter-spacing:-0.172px;">Slot</span>
<span class="t" style="left:8.00px;top:128.60px;letter-spacing:-0.407px;">Features</span>
<span class="t" style="left:70.20px;top:128.60px;letter-spacing:-0.348px;">Sketch</span>
<span class="t" style="left:124.10px;top:128.60px;letter-spacing:-0.407px;">Surfaces</span>
<span class="t" style="left:267.90px;top:128.60px;letter-spacing:0.032px;">Weldments</span>
<span class="t" style="left:344.30px;top:128.60px;letter-spacing:-0.363px;">Evaluate</span>
<span class="t" style="left:404.20px;top:128.60px;letter-spacing:-0.136px;">MBD Dimensions</span>
<span class="t" style="left:511.20px;top:128.60px;letter-spacing:-0.476px;">SOLIDWORKS Add-Ins</span>
<span class="t" style="left:651.50px;top:128.60px;letter-spacing:-0.324px;">MBD</span>
<span class="t" style="left:700.30px;top:128.60px;letter-spacing:0.201px;">Annotation</span>
<span class="t" style="left:776.30px;top:128.60px;letter-spacing:-0.416px;">caddy4SW</span>
<span class="t" style="left:847.00px;top:128.60px;letter-spacing:-0.461px;">SOLIDWORKS Inspection</span>
<span class="t b" style="left:183.90px;top:128.60px;letter-spacing:0.165px;">Sheet Metal</span>
<span class="t" style="left:276.00px;top:155.50px;letter-spacing:-0.044px;">Part1  (Default&lt;&lt;Default&gt;...</span>
<span class="t b" style="left:33.70px;top:206.90px;font-size:13.2px;letter-spacing:-0.678px;">Corner Relief</span>
<span class="t b" style="left:205.20px;top:206.40px;font-size:11px;color:#1f5f98;letter-spacing:-1.034px;">?</span>
<span class="t b" style="left:9.40px;top:268.90px;letter-spacing:-0.743px;">Message</span>
<span class="t" style="left:9.40px;top:289.10px;letter-spacing:-0.244px;">Create corner relief by selecting sheet</span>
<span class="t" style="left:9.40px;top:302.20px;letter-spacing:-0.170px;">metal body and collect all corners or</span>
<span class="t" style="left:9.40px;top:315.40px;letter-spacing:-0.164px;">manually define corner</span>
<span class="t b" style="left:9.40px;top:349.00px;letter-spacing:-0.682px;">Corner Type</span>
<span class="t" style="left:51.20px;top:370.20px;letter-spacing:-0.311px;">2 Bend Corner</span>
<span class="t" style="left:51.20px;top:395.80px;letter-spacing:-0.311px;">3 Bend Corner</span>
<span class="t b" style="left:9.40px;top:428.80px;letter-spacing:-1.143px;">Scope</span>
<span class="t" style="left:43.10px;top:452.40px;letter-spacing:-0.391px;">Edge-Flange2</span>
<span class="t b" style="left:9.40px;top:492.90px;letter-spacing:-0.902px;">Corners</span>
<span class="t" style="left:43.10px;top:516.30px;color:#fff;letter-spacing:-0.457px;">Corner1 [Tear]</span>
<span class="t" style="left:78.40px;top:569.00px;letter-spacing:-0.288px;">Collect all corners</span>
<span class="t b" style="left:9.40px;top:604.00px;letter-spacing:-0.612px;">Define Corner</span>
<span class="t" style="left:43.10px;top:627.20px;letter-spacing:-0.568px;">Face&lt;1&gt;</span>
<span class="t" style="left:43.10px;top:643.00px;letter-spacing:-0.568px;">Face&lt;2&gt;</span>
<span class="t" style="left:43.10px;top:658.80px;letter-spacing:-0.568px;">Face&lt;3&gt;</span>
<span class="t" style="left:93.20px;top:711.00px;letter-spacing:-0.343px;">New Corner</span>
<span class="t b" style="left:9.40px;top:746.00px;letter-spacing:-0.639px;">Relief Options</span>
<span class="t" style="left:49.10px;top:771.90px;letter-spacing:-0.611px;">Tear</span>
<span class="t b" style="left:104.30px;top:982.90px;letter-spacing:0.006px;">Model</span>
<span class="t" style="left:158.70px;top:982.90px;letter-spacing:-0.396px;">3D Views</span>
<span class="t" style="left:226.00px;top:982.90px;letter-spacing:-0.003px;">Motion Study 1</span>
<span class="t" style="left:1.00px;top:1001.50px;letter-spacing:-0.588px;">SOLIDWORKS Premium 2019 SP1.0</span>
<span class="t" style="left:1419.00px;top:1001.50px;letter-spacing:-0.087px;">Editing Part</span>
<span class="t" style="left:1534.00px;top:1001.50px;color:#a8a8a8;letter-spacing:-0.336px;">MMGS</span>
</body>
</html>
